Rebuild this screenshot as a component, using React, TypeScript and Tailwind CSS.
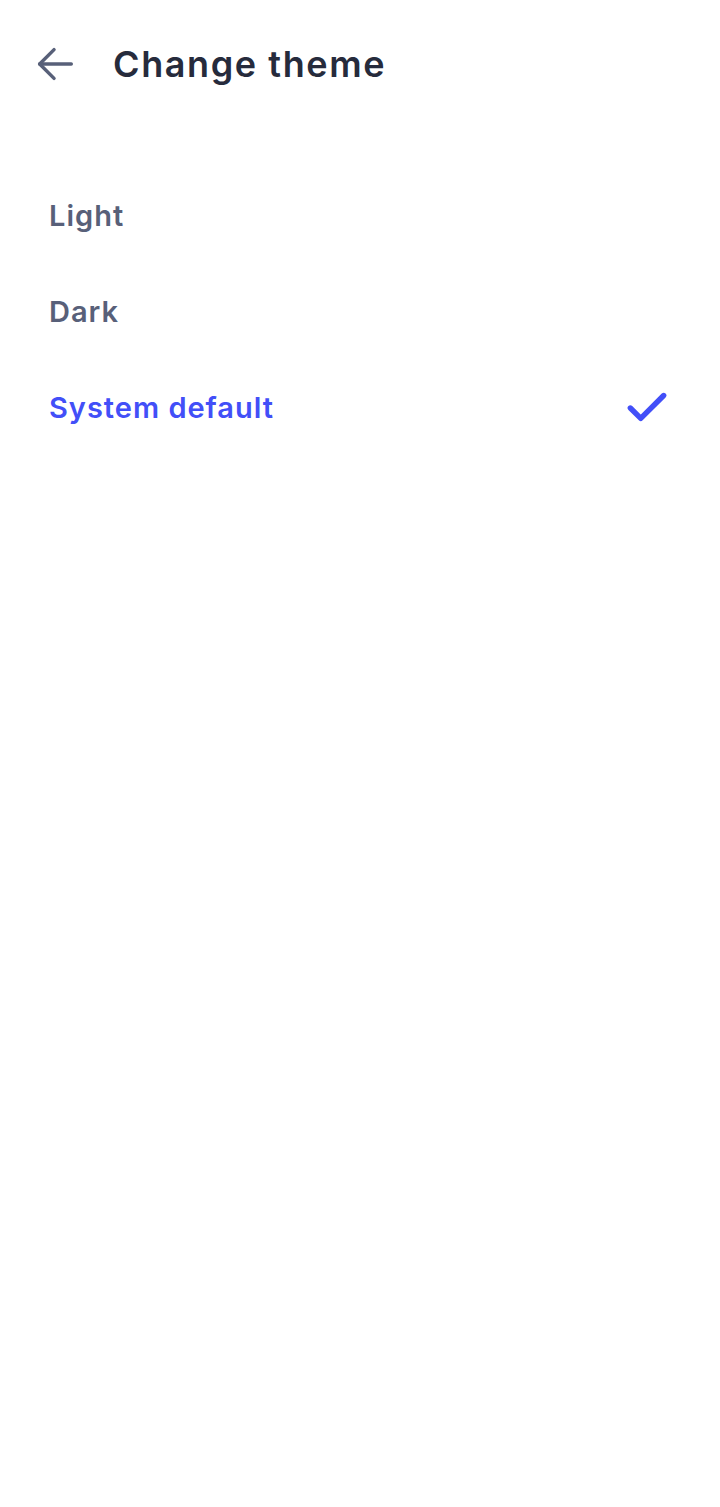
import { Check } from 'lucide-react'

const options = ['Light', 'Dark', 'System default']

export default function App() {
  const selected = 'System default'

  return (
    <div className="min-h-[1507px] bg-white" style={{ fontFamily: 'Inter, "Noto Sans", sans-serif' }}>
      <header className="flex h-[128px] items-center">
        <button className="ml-[32px] flex h-[46px] w-[46px] items-center justify-center text-[#586079]">
          <svg width="46" height="46" viewBox="0 0 24 24" fill="none" stroke="currentColor" strokeWidth="1.8" strokeLinecap="round" strokeLinejoin="round">
            <path d="M20.5 12H4" />
            <path d="M11.5 4.5L4 12l7.5 7.5" />
          </svg>
        </button>
        <h1 className="ml-[35px] text-[36px] font-semibold tracking-[1.6px] text-[#262b3c]">Change theme</h1>
      </header>

      <ul className="mt-[40px]">
        {options.map((opt) => {
          const active = opt === selected
          return (
            <li key={opt} className="flex h-[96px] items-center justify-between pl-[49px] pr-[48px]">
              <span className={`text-[29px] font-semibold tracking-[1px] ${active ? 'text-[#424ff8]' : 'text-[#586079]'}`}>{opt}</span>
              {active && <Check className="h-[50px] w-[50px] text-[#424ff8]" strokeWidth={2.6} />}
            </li>
          )
        })}
      </ul>
    </div>
  )
}
